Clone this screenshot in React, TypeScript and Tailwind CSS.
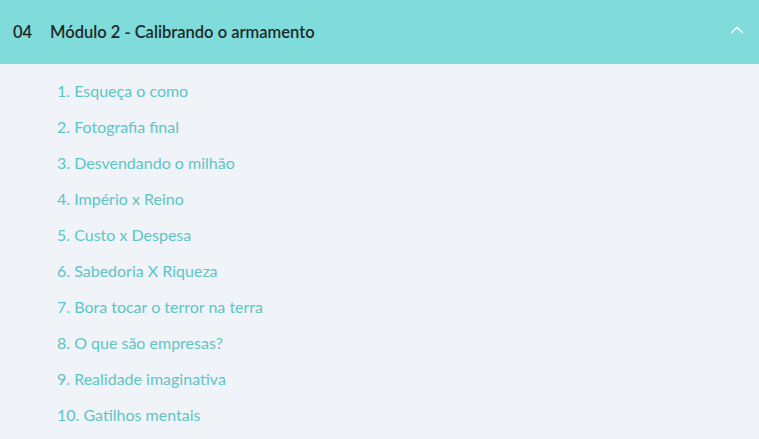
import React from 'react';

const lessons = [
  '1. Esqueça o como',
  '2. Fotografia final',
  '3. Desvendando o milhão',
  '4. Império x Reino',
  '5. Custo x Despesa',
  '6. Sabedoria X Riqueza',
  '7. Bora tocar o terror na terra',
  '8. O que são empresas?',
  '9. Realidade imaginativa',
  '10. Gatilhos mentais',
];

const App: React.FC = () => {
  return (
    <div className="w-[759px] h-[439px] overflow-hidden bg-[#f0f3f8] font-['Lato','Noto_Sans',sans-serif]">
      {/* Module header */}
      <div className="flex h-[64px] items-center bg-[#80dbdb] pl-[13px] pr-[15px]">
        <span className="w-[37px] text-[16.5px] font-semibold text-[#1c2a2a]">04</span>
        <span className="flex-1 text-[16.5px] font-semibold text-[#1c2a2a]">Módulo 2 - Calibrando o armamento</span>
        <svg width="14" height="8" viewBox="0 0 14 8" className="mb-[4px]">
          <path d="M1 7 L7 1.5 L13 7" fill="none" stroke="white" strokeWidth="1.3" />
        </svg>
      </div>

      {/* Lessons */}
      <ul className="pt-[9px] pl-[57px]">
        {lessons.map((l) => (
          <li key={l} className="flex h-[36px] items-center text-[16px] text-[#5cc6c6]">
            {l}
          </li>
        ))}
      </ul>
    </div>
  );
};

export default App;
